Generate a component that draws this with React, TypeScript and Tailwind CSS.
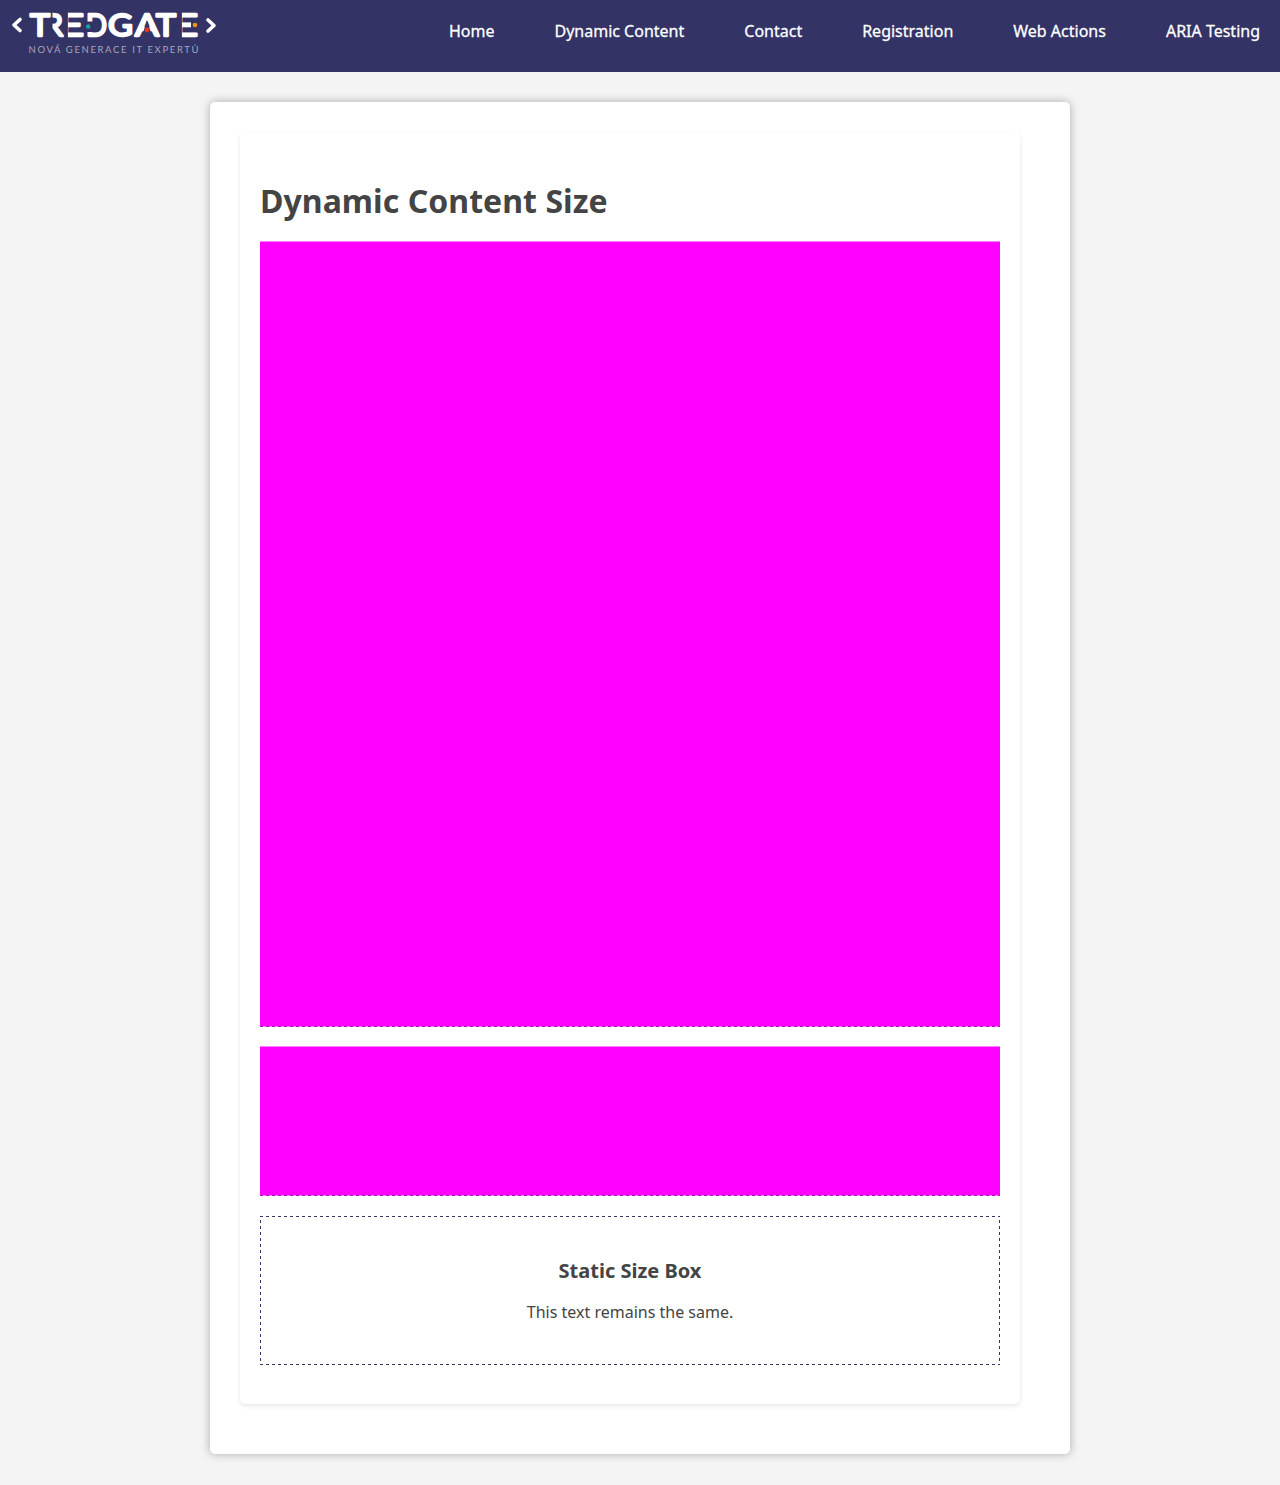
const links = ["Home", "Dynamic Content", "Contact", "Registration", "Web Actions", "ARIA Testing"];

type LetterProps = { c: string; x: number; w: number };

function Letter({ c, x, w }: LetterProps) {
  return (
    <text
      x={x}
      y="35.7"
      textLength={w}
      lengthAdjust="spacingAndGlyphs"
      fill="#fff"
      stroke="#fff"
      strokeWidth="2.3"
      strokeLinejoin="round"
      fontFamily="Lato, sans-serif"
      fontSize="31.5"
    >
      {c}
    </text>
  );
}

function Logo() {
  return (
    <svg width="230" height="62" viewBox="0 0 230 62" className="shrink-0" role="img" aria-label="Tredgate">
      <g fill="none" stroke="#fff" strokeWidth="3.6" strokeLinecap="round" strokeLinejoin="round">
        <path d="M20 19.5 L14 25 L20 30.5" />
        <path d="M208 20 L214 25.5 L208 31" />
      </g>
      {/* Stencil letters: each cover opens the stem of the letter before it */}
      <Letter c="E" x={58} w={26} />
      <rect x="56" y="10" width="11.9" height="29" fill="#333366" />
      <Letter c="R" x={44.5} w={18.5} />
      <rect x="42" y="10" width="10.5" height="29" fill="#333366" />
      <Letter c="T" x={30} w={20} />
      <Letter c="D" x={86} w={21} />
      <rect x="85.5" y="21.5" width="8" height="10.5" fill="#333366" />
      <Letter c="G" x={108} w={25} />
      <Letter c="E" x={172} w={26} />
      <rect x="170" y="10" width="11.9" height="29" fill="#333366" />
      <rect x="191" y="19" width="8" height="11" fill="#333366" />
      <Letter c="A" x={135} w={24} />
      <path d="M147 20 L152.6 38 H141.4 Z" fill="#333366" />
      <Letter c="T" x={156} w={20} />
      <circle cx="88.2" cy="26.5" r="2.2" fill="#14a79b" />
      <circle cx="147" cy="30" r="2.4" fill="#e6332a" />
      <circle cx="195" cy="25" r="2.3" fill="#f39200" />
      <text x="28.5" y="53" textLength="170" fill="#a6a6be" fontFamily="Lato, sans-serif" fontSize="9.5">
        NOVÁ GENERACE IT EXPERTŮ
      </text>
    </svg>
  );
}

export default function App() {
  return (
    <div className="min-h-[1485px] bg-[#f4f4f4] font-['Noto_Sans',sans-serif] text-base text-[#444]">
      <header className="flex h-[72px] items-start justify-between bg-[#333366]">
        <Logo />
        <nav className="flex gap-[60px] pt-[19px] pr-5 text-white [-webkit-text-stroke:0.27px_white]">
          {links.map((l) => (
            <a key={l} href="#" className="leading-6">{l}</a>
          ))}
        </nav>
      </header>
      <div className="mx-auto mt-[30px] h-[1352.4px] w-[860px] rounded-[5px] bg-white p-[30px] shadow-[0_0_10px_rgba(0,0,0,0.3)]">
        <main className="h-[1272.4px] w-[780px] rounded-[5px] bg-white px-5 pt-[47px] shadow-[0_2px_4px_rgba(0,0,0,0.1)]">
          <h1 className="h-[62px] text-[32px] leading-[44px] font-bold tracking-[0.05px]">Dynamic Content Size</h1>
          <section className="h-[786px] bg-[repeating-linear-gradient(90deg,#9919b1_0_3px,#ff80ff_3px_6px)] pb-px">
            <div className="h-full border-t border-[#ff80ff] bg-[#f0f]" />
          </section>
          <section className="mt-[19px] h-[150px] bg-[repeating-linear-gradient(90deg,#9919b1_0_3px,#ff80ff_3px_6px)] pb-px">
            <div className="h-full border-t border-[#ff80ff] bg-[#f0f]" />
          </section>
          <section className="mt-5 h-[149px] bg-[repeating-linear-gradient(90deg,#333366_0_3px,#fff_3px_6px)] py-px text-center">
            <div className="h-full bg-[repeating-linear-gradient(180deg,#fff_0_3px,#333366_3px_6px)] px-px">
              <div className="h-full bg-white pt-10">
                <h2 className="text-xl leading-[27px] font-bold">Static Size Box</h2>
                <p className="mt-[17px] leading-[22px]">This text remains the same.</p>
              </div>
            </div>
          </section>
        </main>
      </div>
    </div>
  );
}
